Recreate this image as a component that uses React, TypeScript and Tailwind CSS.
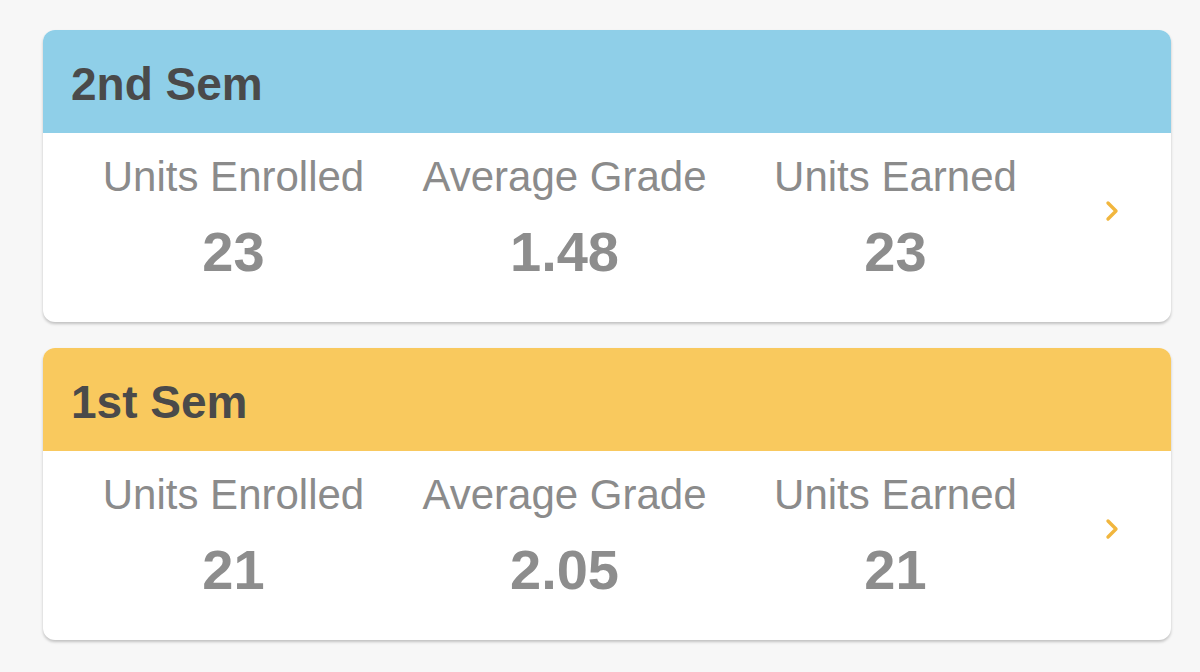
import React from "react";

const sems = [
  { title: "2nd Sem", color: "bg-[#8fcfe8]", enrolled: "23", avg: "1.48", earned: "23" },
  { title: "1st Sem", color: "bg-[#f9c95e]", enrolled: "21", avg: "2.05", earned: "21" },
];

function Chevron() {
  return (
    <svg width="20" height="26" viewBox="0 0 20 26" fill="none">
      <path d="M6 5 L14 13 L6 21" stroke="#f1b63e" strokeWidth="3.4" strokeLinecap="round" strokeLinejoin="round" />
    </svg>
  );
}

function Stat({ label, value }: { label: string; value: string }) {
  return (
    <div className="flex flex-col items-center">
      <div className="text-[42px] leading-[48px] text-[#8b8b8b] whitespace-nowrap">{label}</div>
      <div className="mt-[21px] text-[56px] leading-[60px] font-bold text-[#8d8d8d]">{value}</div>
    </div>
  );
}

export default function App() {
  return (
    <div
      className="w-[1200px] h-[672px] bg-[#f7f7f7] pt-[30px] pl-[43px] flex flex-col gap-[26px]"
      style={{ fontFamily: '"Liberation Sans", Arial, sans-serif' }}
    >
      {sems.map((s) => (
        <div
          key={s.title}
          className="w-[1128px] rounded-[12px] overflow-hidden bg-white shadow-[0_2px_3px_rgba(0,0,0,0.22)]"
        >
          <div className={`${s.color} h-[103px] flex items-center pl-[28px] pt-[5px]`}>
            <span className="text-[46px] font-bold text-[#4a4a4a]">{s.title}</span>
          </div>
          <div className="flex pl-[25px] pt-[20px] pb-[40px]">
            <div className="grid grid-cols-[331px_331px_331px]">
              <Stat label="Units Enrolled" value={s.enrolled} />
              <Stat label="Average Grade" value={s.avg} />
              <Stat label="Units Earned" value={s.earned} />
            </div>
            <div className="ml-[41px] mt-[45px]">
              <Chevron />
            </div>
          </div>
        </div>
      ))}
    </div>
  );
}
